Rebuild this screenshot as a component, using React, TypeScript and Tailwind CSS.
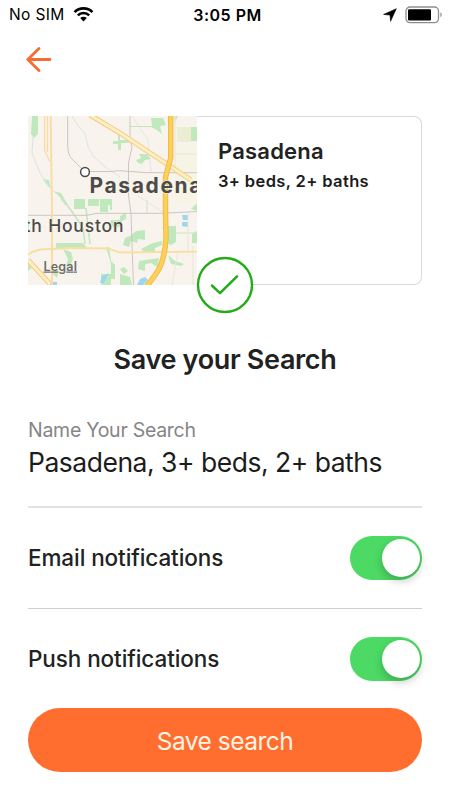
import React from "react";

const StatusBar = () => {
  return (
    <div className="grid h-7 grid-cols-3 items-center pl-[9px] pr-[7px] pt-px text-black">
      <div className="flex items-center">
        <span className="w-[56px] whitespace-nowrap text-[15.5px] tracking-[0.35px]">
          No SIM
        </span>
        <svg className="ml-2" width="21" height="15" viewBox="0 0 21 15" fill="none">
          <path d="M1.6 5.1A12.6 12.6 0 0 1 19.4 5.1" stroke="#000" strokeWidth="2.7" />
          <path d="M4.8 8.3A8 8 0 0 1 16.2 8.3" stroke="#000" strokeWidth="2.5" />
          <path d="M10.5 14.4L7.2 11.1a4.7 4.7 0 0 1 6.6 0z" fill="#000" />
        </svg>
      </div>
      <div className="whitespace-nowrap pl-[3px] text-center text-[16px] font-semibold tracking-[0.5px]">
        3:05 PM
      </div>
      <div className="flex items-center justify-end">
        <svg className="mr-2" width="14" height="14" viewBox="0 0 14 14">
          <path d="M13.3.7L7.6 13.3L7 7.1L.6 6.4z" fill="#000" stroke="#000" strokeLinejoin="round" strokeWidth=".6" />
        </svg>
        <svg width="38" height="18" viewBox="0 0 38 18" fill="none">
          <rect x="1" y="1" width="32.5" height="15.6" rx="4" stroke="#8e8e8e" strokeWidth="1.3" />
          <rect x="3" y="3.2" width="23" height="11.2" rx="1.2" fill="#000" />
          <path d="M35.4 6.3a3 3 0 0 1 0 5z" fill="#8e8e8e" />
        </svg>
      </div>
    </div>
  );
};

const SearchMap = () => {
  return (
    <svg width="169" height="169" viewBox="0 0 169 169" fill="none">
      <rect width="169" height="169" fill="#f8f4ed" />

      {/* parks */}
      <g fill="#c0e8bd">
        <path d="M4 0h6v18l-4 4-3-4z" />
        <path d="M15 63l6 1 2 9-5-5z M25 75l8 2 7 12h-3l-6-9z" />
        <path d="M46 83h11v10H46z M60 83h11v7H60z M72 83h12v6h-4v7h-8z" />
        <path d="M90 15h2v9h9v3h-8v7h-3v-6h-5v-3h5z" />
        <path d="M123 2h12l3 7-6 1 2 8-5-4-6-3h-21v-1h22z" />
        <path d="M111 38h8l4 5-6 1-3 4-4-1-2-3 5-2z" />
        <path d="M162 11h7v14h-7z M146 0h4l-3 6z" />
        <path d="M163 93l6-6v8z M82 89h2v5h-2z" />
        <path d="M83 104h9v-4l6-3v6l-4 2v5l-8 2-4-4z" />
        <path d="M102 120l6-5 9-1v10l-7-1-1 4-6-2-2 6-6-2 2-7z" />
        <path d="M139 110h9v16l-5 3-5-2z" />
        <path d="M113 133l12-6 9-2v4l-7 3v4h-11z" />
        <path d="M111 145l20-3-2 9-6-4-6 1v7l-7-2z" />
        <path d="M28 127h27l4 5H28z" />
        <path d="M35 133l8 3 2 7-4 9-3-2 2-7z M78 131l3 0 2 14 4 4v14h-4v-15z" />
        <path d="M24 153l7 2-2 7-5-5z M73 158h10v11H73z M92 153l4-2 4 4-4 3z M92 158l10 3 2 8H92z" />
        <path d="M140 139l7 6 9 3-3 2-10-2z M0 148l4 4-4 3z M164 118l5-3v12h-5z" />
      </g>
      <rect x="147" y="28" width="22" height="60" fill="#f3f3df" opacity=".6" />
      <path d="M149 11h14v15h-14z" fill="#eceed3" />

      {/* water */}
      <g fill="#9cd7f2">
        <path d="M154 99h6v5h-5z M154 106h6v5l-6-1z" />
        <path d="M74 160l7-3-5 10h-4z M22 166h7v3h-7z M112 163l5-2 3 3-5 5h-6z" />
      </g>
      <g stroke="#d4e8df" strokeWidth="1">
        <path d="M5 21L4 37L12 57L22 72" />
        <path d="M44 0L50 10L57 17L60 31L66 41L76 50L92 61" />
      </g>
      <g stroke="#c5e5c3" strokeWidth="1.6">
        <path d="M30 77L45 97L55 112L57 128" />
        <path d="M58 92L60 110L62 128" />
        <path d="M119 97V84M134 112l14-1M139 117h30" strokeWidth="1" />
      </g>

      {/* minor roads */}
      <g stroke="#e9e5dd" strokeWidth="1">
        <path d="M104 0L120 24L123 56" />
        <path d="M147 55V0M147 38h22M110 80L136 97M144 169l6-34M165 169V130M160 135V97" />
      </g>
      <g stroke="#cbc6c2" strokeWidth="1">
        <path d="M39.7 0V30Q40 39 44 43L53 52L58 55.5H82L92 54.7L119 56.7H169" />
        <path d="M102 0V24L104 31L100.5 47V80L103 97L104 129L105.5 169" />
        <path d="M0 99.3H59L69 97.3H132L169 95.6" />
      </g>

      {/* highways */}
      <g stroke="#f8dda7" strokeWidth="2">
        <path d="M16.6 0V34L22 46M19.4 0V36" strokeWidth="1.4" />
        <path d="M22.7 0L24 95V169" />
      </g>
      <path d="M0 139Q5 135 12 133.5L42 132L80 132.5L92 136.5L169 135.7" stroke="#f8dfa0" strokeWidth="1.8" />
      <path d="M0 144L22 168M62-1L92 17L163 64" stroke="#f4c98b" strokeWidth="5" />
      <path d="M0 144L22 168M62-1L92 17L163 64" stroke="#fdf0bd" strokeWidth="3" />
      <path d="M142.7 0V42L137.5 61V95L138 122Q137 141 131 153Q127 160 118 171" stroke="#edb947" strokeWidth="5.4" />
      <path d="M142.7 0V42L137.5 61V95L138 122Q137 141 131 153Q127 160 118 171" stroke="#fdd05a" strokeWidth="3.6" />

      <circle cx="57" cy="56" r="4.4" fill="#fff" stroke="#4d4b49" strokeWidth="1.5" />
      <g fill="#4d4b49" stroke="#f8f4ed" strokeWidth="1" paintOrder="stroke">
        <text x="61.5" y="77" fontSize="21" fontWeight="700" textLength="112">Pasadena</text>
        <text x="-3.5" y="116.3" fontSize="17.5" fontWeight="500" textLength="99">th Houston</text>
      </g>
      <text
        x="15.5"
        y="154.5"
        fontSize="12.5"
        fontWeight="600"
        textLength="33.5"
        textDecoration="underline"
        fill="#6f6d69"
      >
        Legal
      </text>
    </svg>
  );
};

const Toggle = () => {
  return (
    <div className="flex h-11 w-[72px] items-center justify-end rounded-full bg-[#4cd964] pr-[2.5px]">
      <div className="h-[38px] w-[38px] rounded-full bg-white shadow-[0_4px_8px_rgba(0,0,0,0.22)]" />
    </div>
  );
};

const App = () => {
  return (
    <div className="flex h-[800px] w-[450px] flex-col overflow-hidden bg-white font-['Inter',sans-serif] text-[#222]">
      <StatusBar />

      <div className="flex h-[88px] pl-[26px] pt-[19px]">
        <svg width="26" height="26" viewBox="0 0 26 26" fill="none">
          <path
            d="M24 12.5H2M13 1.6L1.8 12.5L13 23.6"
            stroke="#f46e33"
            strokeWidth="2.8"
            strokeLinecap="round"
            strokeLinejoin="round"
          />
        </svg>
      </div>

      <div className="px-7">
        <div className="relative flex h-[169px] rounded-r-lg border border-l-0 border-[#dadada]">
          <div className="-my-px h-[169px] w-[169px] shrink-0 overflow-hidden">
            <SearchMap />
          </div>
          <div className="pl-[21px] pt-[18px]">
            <h2 className="whitespace-nowrap text-[22px] font-semibold leading-8 tracking-[0.2px]">
              Pasadena
            </h2>
            <p className="whitespace-nowrap text-[16.5px] font-semibold leading-7 tracking-[0.37px] text-[#1c1c1c]">
              3+ beds, 2+ baths
            </p>
          </div>
          <svg
            className="absolute left-[168px] top-[139px]"
            width="58"
            height="58"
            viewBox="0 0 58 58"
            fill="none"
          >
            <circle cx="29" cy="29" r="27" fill="#fff" stroke="#25ab19" strokeWidth="2.4" />
            <path
              d="M15.9 29.5L24 37.2L41 20.3"
              stroke="#25ab19"
              strokeWidth="2.5"
              strokeLinecap="round"
              strokeLinejoin="round"
            />
          </svg>
        </div>
      </div>

      <h1 className="mt-[55px] whitespace-nowrap text-center text-[27px] font-semibold leading-10 tracking-[-0.34px]">
        Save your Search
      </h1>

      <div className="mx-7 mt-9 h-[92px] border-b-2 border-[#e2e2e2]">
        <p className="whitespace-nowrap text-[19.5px] leading-7 tracking-[-0.27px] text-[#858585]">
          Name Your Search
        </p>
        <p className="whitespace-nowrap text-[26.5px] leading-9 tracking-[-0.49px] text-[#1c1c1c]">
          Pasadena, 3+ beds, 2+ baths
        </p>
      </div>

      <div className="mx-7 flex h-[101px] items-center justify-between border-b border-[#cfcfcf]">
        <span className="whitespace-nowrap text-[22.5px] font-medium tracking-[-0.09px]">
          Email notifications
        </span>
        <Toggle />
      </div>
      <div className="mx-7 flex h-[99px] items-center justify-between">
        <span className="whitespace-nowrap text-[22.5px] font-medium tracking-[-0.09px]">
          Push notifications
        </span>
        <Toggle />
      </div>

      <button className="mx-7 h-16 shrink-0 rounded-full bg-[#ff6e2e] pt-[3px] text-[24.5px] tracking-[-0.5px] text-[#fff3e4]">
        Save search
      </button>
    </div>
  );
};

export default App;
